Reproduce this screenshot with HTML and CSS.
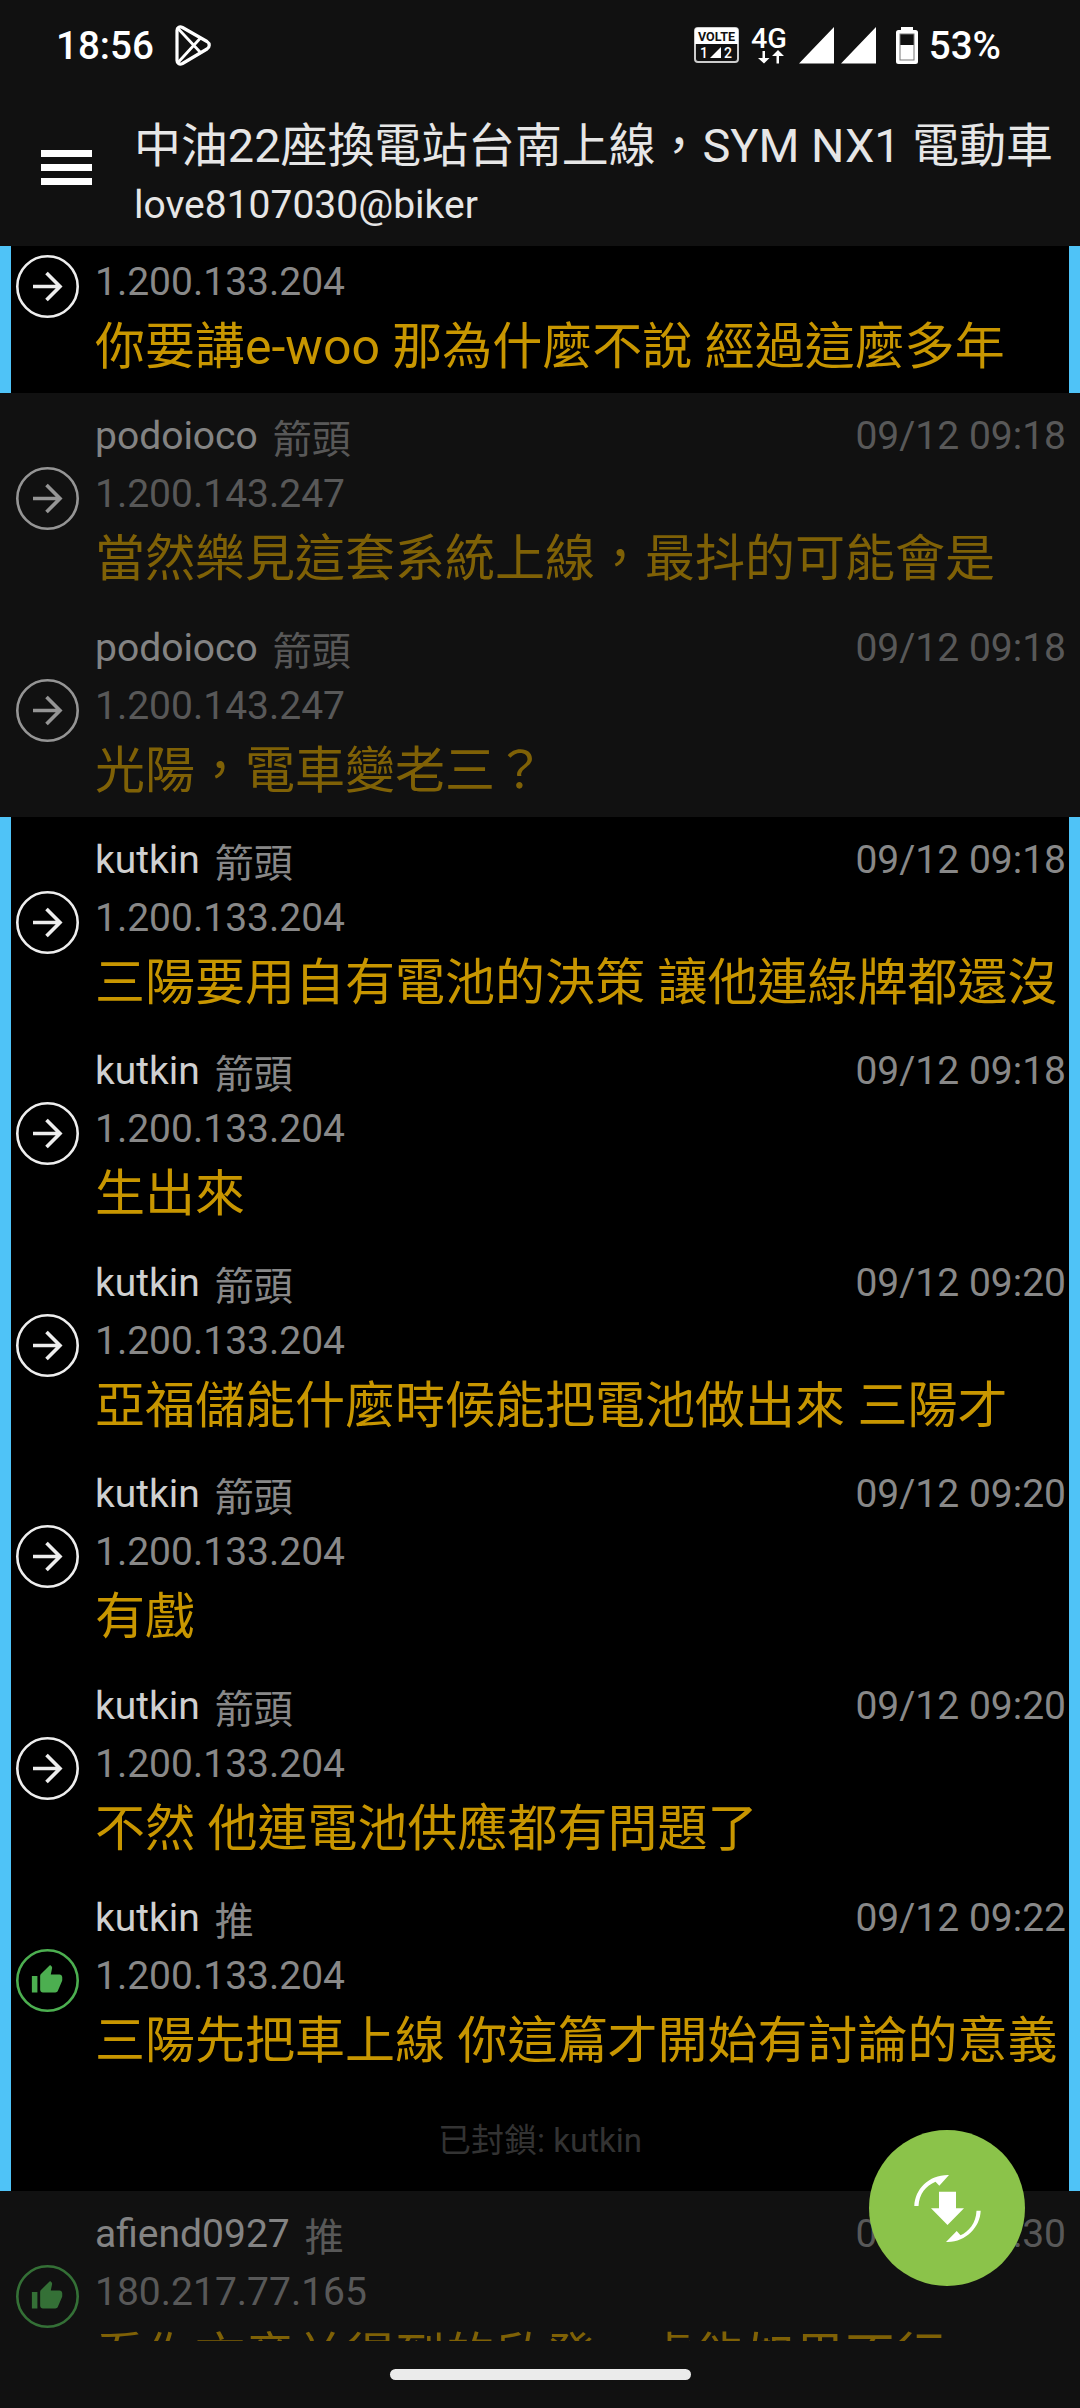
FILE: index.html
```html
<!DOCTYPE html>
<html lang="zh-Hant">
<head>
<meta charset="utf-8">
<title>love8107030@biker</title>
<link rel="stylesheet" href="styles.css">
</head>
<body>
<svg class="defs" width="0" height="0">
  <symbol id="arrow" viewBox="0 0 63 63">
    <circle cx="31.5" cy="31.5" r="30.2" fill="none" stroke="currentColor" stroke-width="2.6"/>
    <path d="M17 31.500H44M30.500 18L44 31.500L30.500 45" fill="none" stroke="currentColor" stroke-width="3.600"/>
  </symbol>
  <symbol id="thumb" viewBox="0 0 63 63">
    <circle cx="31.5" cy="31.5" r="30.2" fill="none" stroke="currentColor" stroke-width="2.6"/>
    <path transform="translate(14.500 14.500) scale(1.380)" d="M1 21h4V9H1v12zm22-11c0-1.100-.9-2-2-2h-6.310l.95-4.570.03-.32c0-.41-.17-.79-.44-1.060L14.170 1 7.590 7.590C7.220 7.950 7 8.450 7 9v10c0 1.100.9 2 2 2h9c.83 0 1.540-.5 1.840-1.220l3.020-7.050c.09-.23.14-.47.14-.73v-2z" fill="currentColor"/>
  </symbol>
</svg>
<div class="screen">
  <header class="status">
    <span class="clock">18:56</span>
    <svg class="play" width="36" height="41" viewBox="0 0 36 41" fill="none" stroke="#fff" stroke-width="3.200" stroke-linejoin="round">
      <path d="M2 5.500C2 2.500 4.500 1 7.500 2.500L32 16.500C35 18.500 35 22 32 24L7.500 38.500C4.500 40 2 38.500 2 35.500Z"/>
      <path d="M3 3.500L25.500 27.500M3 37.500L25.500 13" stroke-width="2.800"/>
    </svg>
    <div class="indicators">
      <svg width="45" height="36" viewBox="0 0 45 36">
        <rect x="1" y="1" width="43" height="34" rx="3" fill="none" stroke="#ccc" stroke-width="2"/>
        <path d="M1 3Q1 1 3 1H42Q44 1 44 3V17H1Z" fill="#fff"/>
        <text class="volte" x="22.500" y="14" textLength="37" lengthAdjust="spacingAndGlyphs">VOLTE</text>
        <text class="sim" x="10" y="31">1</text>
        <text class="sim" x="34" y="31">2</text>
        <path d="M16 31L27 20V31Z" fill="#fff"/>
      </svg>
      <svg class="net" width="37" height="38" viewBox="0 0 37 38">
        <text class="lte" x="0" y="22" textLength="36" lengthAdjust="spacingAndGlyphs">4G</text>
        <path d="M11.500 25h2.500v7h4.500l-5.500 5.500L7 32h4.500zM25.500 37.500h2.500V30h5l-6-6-6 6h4.500z" fill="#fff"/>
      </svg>
      <svg class="sig" width="77" height="37" viewBox="0 0 77 37" fill="#fff"><path d="M0 36.500L35 0V36.500ZM42 36.500L77 0V36.500Z"/></svg>
      <svg class="bat" width="22" height="37" viewBox="0 0 22 37">
        <path d="M5 0H17V3H19.500Q22 3 22 5.500V34.500Q22 37 19.500 37H2.500Q0 37 0 34.500V5.500Q0 3 2.500 3H5Z" fill="#fff"/>
        <path d="M3.500 6.500H18.500V33.500H3.500Z" fill="#777"/>
        <path d="M4.500 7.500H17.500V18H4.500Z" fill="#111"/>
        <path d="M4.500 18H17.500V32.500H4.500Z" fill="#fff"/>
      </svg>
      <span class="pct">53%</span>
    </div>
  </header>
  <div class="appbar">
    <div class="menu"><i></i><i></i><i></i></div>
    <div class="titles">
      <div class="title">中油22座換電站台南上線，SYM NX1 電動車</div>
      <div class="board">love8107030@biker</div>
    </div>
  </div>
  <main class="list">
    <article class="row hot first">
      <svg class="ic"><use href="#arrow"/></svg>
      <div class="body">
        <div class="ip">1.200.133.204</div>
        <div class="msg">你要講e-woo 那為什麼不說 經過這麼多年</div>
      </div>
    </article>
    <article class="row dim">
      <svg class="ic"><use href="#arrow"/></svg>
      <div class="body">
        <div class="meta"><span class="name">podoioco</span><span class="kind">箭頭</span><time>09/12 09:18</time></div>
        <div class="ip">1.200.143.247</div>
        <div class="msg">當然樂見這套系統上線，最抖的可能會是</div>
      </div>
    </article>
    <article class="row dim">
      <svg class="ic"><use href="#arrow"/></svg>
      <div class="body">
        <div class="meta"><span class="name">podoioco</span><span class="kind">箭頭</span><time>09/12 09:18</time></div>
        <div class="ip">1.200.143.247</div>
        <div class="msg">光陽，電車變老三？</div>
      </div>
    </article>
    <article class="row hot">
      <svg class="ic"><use href="#arrow"/></svg>
      <div class="body">
        <div class="meta"><span class="name">kutkin</span><span class="kind">箭頭</span><time>09/12 09:18</time></div>
        <div class="ip">1.200.133.204</div>
        <div class="msg">三陽要用自有電池的決策 讓他連綠牌都還沒</div>
      </div>
    </article>
    <article class="row hot">
      <svg class="ic"><use href="#arrow"/></svg>
      <div class="body">
        <div class="meta"><span class="name">kutkin</span><span class="kind">箭頭</span><time>09/12 09:18</time></div>
        <div class="ip">1.200.133.204</div>
        <div class="msg">生出來</div>
      </div>
    </article>
    <article class="row hot">
      <svg class="ic"><use href="#arrow"/></svg>
      <div class="body">
        <div class="meta"><span class="name">kutkin</span><span class="kind">箭頭</span><time>09/12 09:20</time></div>
        <div class="ip">1.200.133.204</div>
        <div class="msg">亞福儲能什麼時候能把電池做出來 三陽才</div>
      </div>
    </article>
    <article class="row hot">
      <svg class="ic"><use href="#arrow"/></svg>
      <div class="body">
        <div class="meta"><span class="name">kutkin</span><span class="kind">箭頭</span><time>09/12 09:20</time></div>
        <div class="ip">1.200.133.204</div>
        <div class="msg">有戲</div>
      </div>
    </article>
    <article class="row hot">
      <svg class="ic"><use href="#arrow"/></svg>
      <div class="body">
        <div class="meta"><span class="name">kutkin</span><span class="kind">箭頭</span><time>09/12 09:20</time></div>
        <div class="ip">1.200.133.204</div>
        <div class="msg">不然 他連電池供應都有問題了</div>
      </div>
    </article>
    <article class="row hot">
      <svg class="ic push"><use href="#thumb"/></svg>
      <div class="body">
        <div class="meta"><span class="name">kutkin</span><span class="kind">推</span><time>09/12 09:22</time></div>
        <div class="ip">1.200.133.204</div>
        <div class="msg">三陽先把車上線 你這篇才開始有討論的意義</div>
      </div>
    </article>
    <div class="blocked">已封鎖: kutkin</div>
    <article class="row dim">
      <svg class="ic push"><use href="#thumb"/></svg>
      <div class="body">
        <div class="meta"><span class="name">afiend0927</span><span class="kind">推</span><time>09/12 09:30</time></div>
        <div class="ip">180.217.77.165</div>
        <div class="msg">看你文章並得到的啟發，處能如果不行</div>
      </div>
    </article>
  </main>
  <footer class="nav"><span class="pill"></span></footer>
  <button class="fab" aria-label="refresh">
    <svg width="68" height="68" viewBox="0 0 68 68" fill="#fff">
      <path d="M26 17.700H43V34.300H51L34.500 51L18 34.300H26Z"/>
      <path d="M1.300 32C2 15 16 .5 36 1L26.300 11.700L22.500 7.700C13 11.500 6 20 5.500 32Z"/>
      <path d="M67.700 36.700C67 54 52 68.500 33 68L43.700 57L47.500 61.200C56 57.500 63 49 63.500 36.700Z"/>
    </svg>
  </button>
</div>
</body>
</html>
```
FILE: styles.css
```css
* { box-sizing: border-box; }
body {
  margin: 0;
  background: #111;
  font-family: Roboto, "Noto Sans CJK TC", sans-serif;
}
.defs { display: block; }
.screen {
  position: relative;
  display: flex;
  flex-direction: column;
  width: 1080px;
  height: 2408px;
  overflow: hidden;
  background: #111;
  color: #e6e6e6;
}
.status {
  display: flex;
  align-items: center;
  height: 90px;
  padding: 0 79px 0 56px;
  color: #fff;
  font-size: 38.6px;
  font-weight: 500;
}
.play { margin-left: 21px; }
.indicators { display: flex; align-items: center; margin-left: auto; }
.net { margin-left: 12px; overflow: visible; }
.sig { margin-left: 11px; }
.bat { margin-left: 20px; }
.pct { margin-left: 11px; }
.volte { font: bold 13px Roboto, sans-serif; fill: #111; text-anchor: middle; }
.sim { font: 500 14px Roboto, sans-serif; fill: #fff; text-anchor: middle; }
.lte { font: 500 28px Roboto, sans-serif; fill: #fff; }
.appbar { display: flex; height: 156px; padding: 20px 0 0 41px; }
.menu { display: flex; flex-direction: column; gap: 7px; width: 51px; margin-top: 40px; }
.menu i { height: 7px; background: #fff; }
.titles { margin-left: 42px; white-space: nowrap; }
.title { font-size: 46.9px; line-height: 72px; }
.board { font-size: 39px; line-height: 46px; }
.list { height: 2095px; flex: none; overflow: hidden; }
.row {
  display: flex;
  height: 211.6px;
  padding: 14px 3px 0 5px;
  border: solid transparent;
  border-width: 0 11px;
}
.hot { background: #000; border-color: #4fc3f7; }
.first { height: 147.4px; padding-top: 7px; }
.first .ic { margin-top: 2px; }
.ic { width: 63px; height: 63px; margin-top: 60px; flex: none; color: #eee; }
.push { color: #4caf50; }
.dim .ic, .dim .body { opacity: 0.6; }
.body { flex: 1; margin-left: 16px; white-space: nowrap; }
.meta { display: flex; align-items: flex-start; height: 58px; color: #888; font-size: 39px; line-height: 58px; }
.name { color: #d0d0d0; }
.kind { margin: 4px 0 0 15px; }
.meta time { margin-left: auto; }
.ip { color: #888; font-size: 39px; line-height: 58px; }
.msg { color: #c89600; font-size: 50px; line-height: 72px; }
.blocked {
  height: 104.8px;
  background: #000;
  border: solid #4fc3f7;
  border-width: 0 11px;
  color: #333;
  font-size: 33px;
  line-height: 109px;
  text-align: center;
}
.nav { display: flex; justify-content: center; padding-top: 28px; }
.pill { width: 301px; height: 11px; border-radius: 6px; background: #ebebeb; }
.fab {
  position: absolute;
  left: 869px;
  top: 2130px;
  display: flex;
  align-items: center;
  justify-content: center;
  width: 156px;
  height: 156px;
  padding: 0;
  border: 0;
  border-radius: 50%;
  background: #8bc34a;
}
```
